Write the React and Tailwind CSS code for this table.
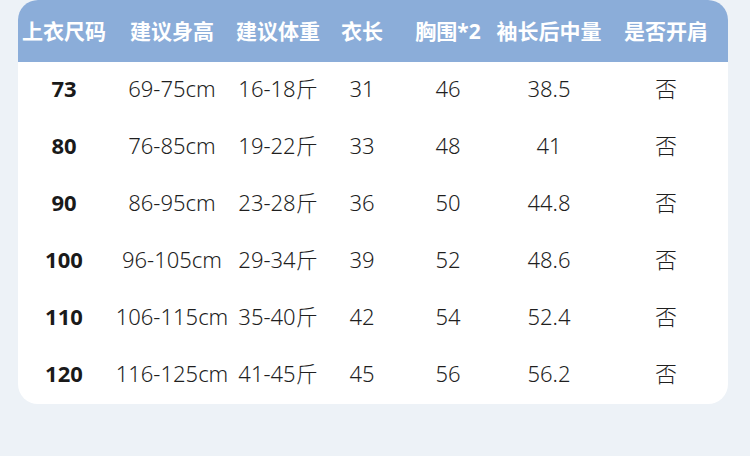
import React from "react";

const headers = ["上衣尺码", "建议身高", "建议体重", "衣长", "胸围*2", "袖长后中量", "是否开肩"];
const rows = [
  ["73", "69-75cm", "16-18斤", "31", "46", "38.5", "否"],
  ["80", "76-85cm", "19-22斤", "33", "48", "41", "否"],
  ["90", "86-95cm", "23-28斤", "36", "50", "44.8", "否"],
  ["100", "96-105cm", "29-34斤", "39", "52", "48.6", "否"],
  ["110", "106-115cm", "35-40斤", "42", "54", "52.4", "否"],
  ["120", "116-125cm", "41-45斤", "45", "56", "56.2", "否"],
];

const grid = "grid grid-cols-[92px_124px_88px_80px_92px_110px_124px]";

export default function App() {
  return (
    <div
      className="w-[750px] h-[456px] bg-[#edf2f7] pl-[18px] pr-[22px]"
      style={{ fontFamily: '"Noto Sans", "Noto Sans CJK SC", sans-serif' }}
    >
      <div className="w-[710px] bg-white rounded-[20px] overflow-hidden">
        <div className={`${grid} h-[62px] bg-[#8badd9] items-center`}>
          {headers.map((h, i) => (
            <div key={i} className="text-center text-white font-bold text-[21px] leading-none whitespace-nowrap">
              {h}
            </div>
          ))}
        </div>
        {rows.map((r, ri) => (
          <div key={ri} className={`${grid} h-[57px] items-center pb-[5px]`}>
            {r.map((c, ci) => (
              <div
                key={ci}
                className={`text-center whitespace-nowrap text-[22px] leading-none ${
                  ci === 0 ? "font-bold text-[#1a1a1a]" : "font-light text-[#1f1f1f]"
                }`}
              >
                {c}
              </div>
            ))}
          </div>
        ))}
      </div>
    </div>
  );
}
